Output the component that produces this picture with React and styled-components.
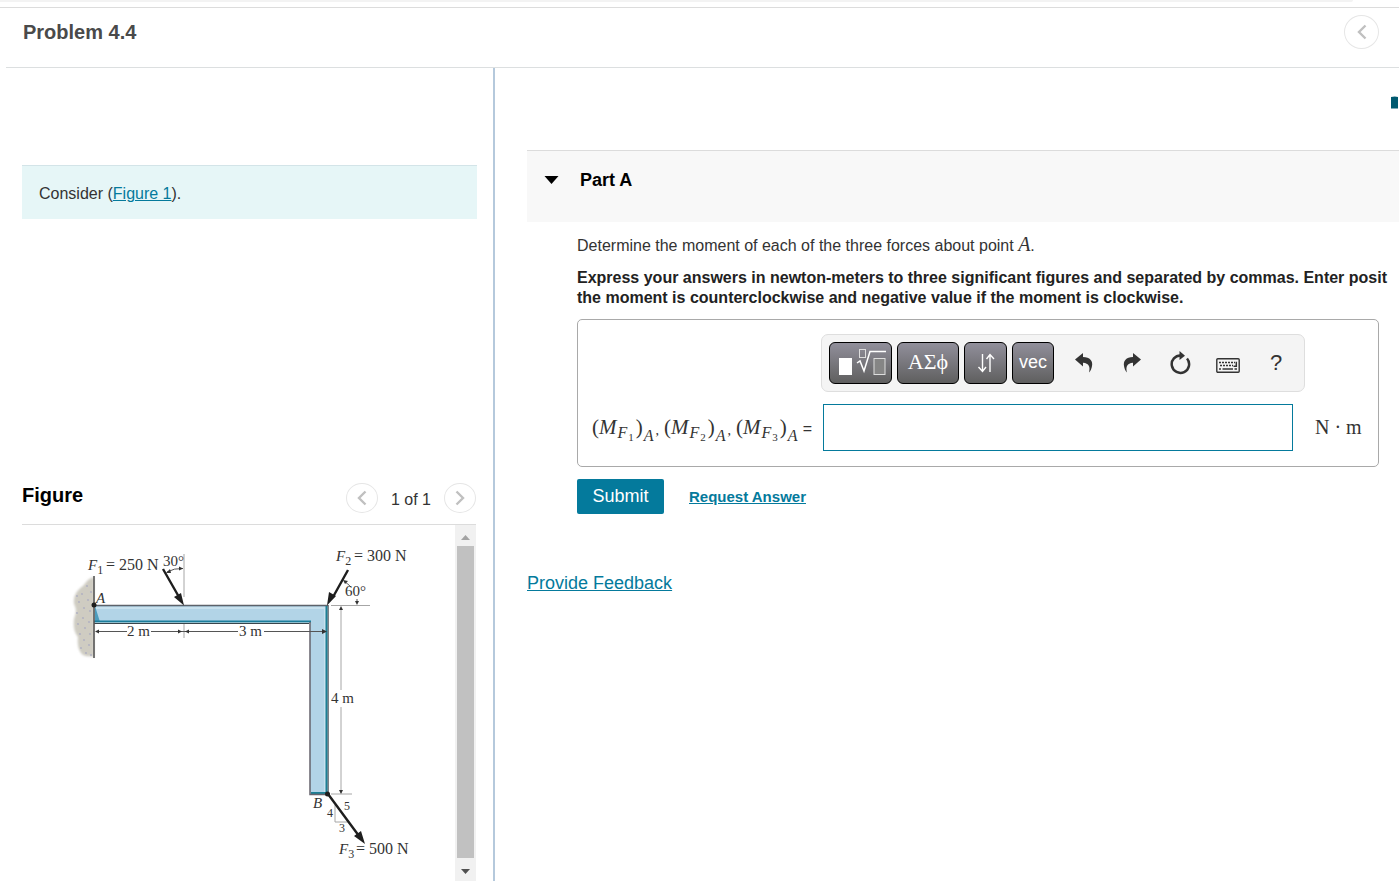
import React from 'react';
import styled, { createGlobalStyle } from 'styled-components';

const SANS = '"Liberation Sans", Arial, sans-serif';
const SERIF = '"Liberation Serif", "Times New Roman", serif';

const GlobalStyle = createGlobalStyle`
  * { box-sizing: border-box; }
  body { margin: 0; background: #fff; color: #333; font-family: ${SANS}; font-size: 16px; overflow: hidden; }
  h1, h2, h3, p { margin: 0; }
  button { font-family: inherit; cursor: pointer; padding: 0; }
`;

const Page = styled.div`
  display: flex;
  flex-direction: column;
  height: 100vh;
  overflow: hidden;
`;

const TopStrip = styled.div`
  height: 2px;
  margin-right: 46px;
  border-bottom-right-radius: 2px;
  background: #f3f3f3;
`;

const Header = styled.header`
  margin-top: 5px;
  border-top: 1px solid #dcdcdc;
  padding-left: 6px;
`;

const HeaderRow = styled.div`
  display: flex;
  align-items: flex-start;
  justify-content: space-between;
  height: 60px;
  padding: 7px 20px 0 17px;
  border-bottom: 1px solid #dcdfe0;
`;

const Title = styled.h1`
  font-size: 20px;
  line-height: 34px;
  color: #4a4a4a;
`;

const RoundButton = styled.button`
  display: flex;
  align-items: center;
  justify-content: center;
  width: ${(p) => p.$width}px;
  height: ${(p) => p.$height}px;
  border: 1px solid #e6e6e6;
  border-radius: 50%;
  background: #fff;
  color: #c0c0c0;
`;

const Columns = styled.main`
  display: flex;
  flex: 1;
  min-height: 0;
`;

const Sidebar = styled.section`
  display: flex;
  flex-direction: column;
  flex: none;
  width: 495px;
  padding: 97px 17px 0 22px;
  border-right: 2px solid #b5c9dc;
`;

const Link = styled.a`
  color: #047a9c;
  text-decoration: underline;
  font-size: ${(p) => p.$size || 16}px;
  font-weight: ${(p) => (p.$bold ? 700 : 400)};
`;

const Prompt = styled.p`
  height: 54px;
  margin-right: -1px;
  padding: 0 17px;
  border-top: 1px solid #d3e4e8;
  background: #e6f6f7;
  line-height: 55px;
`;

const FigureHeader = styled.div`
  display: flex;
  align-items: flex-start;
  justify-content: space-between;
  height: 42px;
  margin-top: 264px;
  border-bottom: 1px solid #dcdcdc;
`;

const Heading = styled.h2`
  font-size: 20px;
  line-height: 24px;
  color: #000;
`;

const Pager = styled.div`
  display: flex;
  gap: 13px;
  line-height: 34px;
`;

const FigureView = styled.div`
  display: flex;
  flex: 1;
  min-height: 0;
`;

const Drawing = styled.div`
  flex: 1;
  min-width: 0;
  overflow: hidden;
  svg { display: block; font-family: ${SERIF}; }
`;

const ScrollBar = styled.div`
  display: flex;
  flex-direction: column;
  width: 21px;
  padding: 0 2px;
  background: #f1f1f1;
`;

const ScrollArrow = styled.button`
  display: flex;
  align-items: center;
  justify-content: center;
  height: ${(p) => p.$height}px;
  padding-top: 3px;
  border: 0;
  background: none;
  color: ${(p) => p.$color};
`;

const ScrollThumb = styled.div`
  flex: 1;
  background: #c1c1c1;
`;

const Content = styled.section`
  flex: 1;
  min-width: 0;
  padding-left: 32px;
`;

const Toolbox = styled.div`
  display: flex;
  justify-content: flex-end;
  height: 82px;
  padding-top: 28px;
`;

const PartHeader = styled.div`
  display: flex;
  align-items: flex-start;
  gap: 21px;
  height: 72px;
  padding: 18px 17px 0;
  border-top: 1px solid #dcdcdc;
  background: #f8f8f8;
`;

const Toggle = styled.button`
  display: flex;
  align-items: center;
  height: 22px;
  border: 0;
  background: none;
`;

const PartTitle = styled.h3`
  font-size: 18px;
  line-height: 22px;
  color: #000;
`;

const PartBody = styled.div`
  padding-left: 50px;
`;

const Question = styled.p`
  padding-top: 10px;
  line-height: 24px;
`;

const Instructions = styled.p`
  margin-top: 10px;
  line-height: 20px;
  font-weight: 700;
  color: #222;
  white-space: nowrap;
`;

const AnswerBox = styled.div`
  margin: 11px 20px 0 0;
  padding: 14px 14px 15px;
  border: 1px solid #a9a9a9;
  border-radius: 5px;
`;

const Toolbar = styled.div`
  display: flex;
  width: 484px;
  height: 58px;
  margin-left: 229px;
  padding: 7px 0 0 7px;
  border: 1px solid #dedede;
  border-radius: 7px;
  background: #f4f4f4;
`;

const DarkKeys = styled.div`
  display: flex;
  gap: 5px;
  margin-right: 6px;
`;

const DarkKey = styled.button`
  display: flex;
  align-items: center;
  justify-content: center;
  width: ${(p) => p.$width}px;
  height: 42px;
  padding-bottom: 2px;
  border: 1px solid #000;
  border-radius: 6px;
  background: linear-gradient(#918f9b, #5f5f5f);
  color: #fff;
  font-family: ${(p) => (p.$serif ? SERIF : SANS)};
  font-size: ${(p) => (p.$serif ? 22 : 18)}px;
`;

const IconKey = styled.button`
  display: flex;
  align-items: center;
  justify-content: center;
  width: 48px;
  height: 42px;
  border: 0;
  background: none;
  color: #333;
  font-size: 22px;
`;

const AnswerRow = styled.div`
  display: flex;
  align-items: center;
  margin-top: 12px;
`;

const MathLabel = styled.label`
  display: flex;
  flex: none;
  align-items: baseline;
  width: 231px;
  color: #333;
  font-family: ${SERIF};
  font-size: 21px;
`;

const Term = styled.span`
  flex: none;
  width: ${(p) => (p.$last ? 64 : 72)}px;
  white-space: nowrap;
`;

const Sub = styled.sub`
  position: relative;
  top: ${(p) => p.$drop}px;
  margin: 0 1px;
  font-size: ${(p) => p.$size}px;
  line-height: 0;
  vertical-align: baseline;
`;

const Equals = styled.span`
  margin-left: auto;
  padding-right: 11px;
  font-family: ${SANS};
  font-size: 16px;
`;

const AnswerInput = styled.input`
  flex: 1;
  min-width: 0;
  height: 47px;
  padding: 0 10px;
  border: 1px solid #047a9c;
  font-size: 18px;
  outline: none;
`;

const Unit = styled.span`
  flex: none;
  width: 71px;
  padding-left: 22px;
  font-family: ${SERIF};
  font-size: 20px;
`;

const MathLetter = styled.i`
  font-family: ${SERIF};
  font-size: 20px;
`;

const Actions = styled.div`
  display: flex;
  align-items: center;
  gap: 25px;
  margin-top: 12px;
`;

const Submit = styled.button`
  width: 87px;
  height: 35px;
  border: 0;
  border-radius: 2px;
  background: #047a9c;
  color: #fff;
  font-size: 18px;
`;

const Feedback = styled.div`
  margin-top: 59px;
`;

const Chevron = ({ right }) => (
  <svg width="10" height="16" viewBox="0 0 10 16" fill="none" stroke="currentColor" strokeWidth="2.4" aria-hidden="true">
    <path d={right ? 'M1.5 1.5 8 8 1.5 14.5' : 'M8.5 1.5 2 8 8.5 14.5'} />
  </svg>
);

const Triangle = ({ up }) => (
  <svg width="9" height="5" viewBox="0 0 9 5" fill="currentColor" aria-hidden="true">
    <path d={up ? 'M0 5 4.5 0 9 5Z' : 'M0 0 4.5 5 9 0Z'} />
  </svg>
);

const speckles = [
  [87, 586], [91, 592], [82, 594], [88, 600], [79, 602], [84, 608], [90, 611], [77, 613],
  [83, 618], [89, 622], [78, 624], [85, 628], [80, 634], [90, 634], [84, 640], [89, 645],
  [81, 648], [86, 653], [91, 655], [77, 596],
];

function BeamDrawing() {
  return (
    <svg width="433" height="356" viewBox="22 525 433 356" role="img" aria-label="Cantilever beam with three forces">
      <defs>
        <filter id="soft" x="-20%" y="-20%" width="140%" height="140%">
          <feGaussianBlur stdDeviation="1" />
        </filter>
      </defs>
      <path
        d="M94 577C89 578 87 581 83 586C77 590 73 596 74 604C77 610 76 613 74 619C73 628 75 633 78 637C77 645 79 652 83 655C87 657 90 656 94 657Z"
        fill="#cfccc2"
        filter="url(#soft)"
      />
      {speckles.map(([x, y]) => (
        <circle key={`${x}-${y}`} cx={x} cy={y} r="1.1" fill="#b3b3c2" />
      ))}
      <path d="M94.5 605H328V794H310V622H94.5Z" fill="#b2d4e7" />
      <path d="M95 608H325V792" fill="none" stroke="#c8e1ee" strokeWidth="2" />
      <path d="M95 606 100 622H95Z" fill="#4c9cbd" />
      <path d="M94 621.5H311" stroke="#1b7d9b" strokeWidth="2" />
      <path d="M94 623.5H309" stroke="#39454b" />
      <path d="M94 605.5H328" stroke="#5d626a" strokeWidth="1.5" />
      <path d="M326.5 606V793H311" fill="none" stroke="#1c7f94" strokeWidth="2" />
      <path d="M328.2 605V794" stroke="#444a50" />
      <path d="M310 622V794.5H328" fill="none" stroke="#65636c" strokeWidth="1.5" />
      <path d="M94 576V658" stroke="#555" strokeWidth="1.6" />

      <g stroke="#a6a6a6" fill="none">
        <path d="M184 554V597M184 624V638" />
        <path d="M331 605.5H370M341 608V690M341 707V793M331 794H352" />
        <path d="M335 805V822H348" />
      </g>
      <g stroke="#555" fill="none">
        <path d="M96 631.5H127M151 631.5H238M264 631.5H326" />
        <path d="M167 572Q174 568 183 568.5" />
        <path d="M344 581Q348 584 351 587M357 599V603" />
      </g>
      <g fill="#333">
        <path d="M95 631.5 99 629.5V633.5ZM182 631.5 178 629.5V633.5ZM185 631.5 189 629.5V633.5ZM327 631.5 322 629V634Z" />
        <path d="M341 606 339 610H343ZM341 794 339 790H343ZM183 568.5 179 566.5V570.5ZM166 573 170 569 171 573ZM343 580 348 581 345 584ZM357 605 355 601H359Z" />
      </g>
      <g stroke="#1e1e1e" strokeWidth="2.4">
        <path d="M163 569 179 597M348 570 333 597M328 794 359 836" />
      </g>
      <g fill="#1e1e1e">
        <path d="M184 605.5 174 597 181 593ZM327 605.5 329 592 336 596ZM365 844 354 836 361 831Z" />
        <circle cx="94" cy="605" r="2.5" />
        <circle cx="327.5" cy="794" r="2.5" />
      </g>

      <g fill="#333" fontSize="15">
        <text x="88" y="570"><tspan fontStyle="italic">F</tspan><tspan fontSize="12" dy="4">1</tspan></text>
        <text x="106" y="570" fontSize="16">= 250 N</text>
        <text x="163" y="566">30°</text>
        <text x="336" y="561"><tspan fontStyle="italic">F</tspan><tspan fontSize="12" dy="4">2</tspan></text>
        <text x="354" y="561" fontSize="16">= 300 N</text>
        <text x="345" y="596">60°</text>
        <text x="96" y="603" fontStyle="italic">A</text>
        <text x="127" y="636">2 m</text>
        <text x="239" y="636">3 m</text>
        <text x="331" y="703">4 m</text>
        <text x="313" y="808" fontStyle="italic">B</text>
        <text x="344" y="810" fontSize="12">5</text>
        <text x="327" y="817" fontSize="12">4</text>
        <text x="339" y="832" fontSize="12">3</text>
        <text x="339" y="854"><tspan fontStyle="italic">F</tspan><tspan fontSize="12" dy="4">3</tspan></text>
        <text x="356" y="854" fontSize="16">= 500 N</text>
      </g>
    </svg>
  );
}

const TemplateIcon = () => (
  <svg width="50" height="30" viewBox="0 0 50 30" fill="none" stroke="#fff" aria-hidden="true">
    <rect x="3" y="11" width="13" height="17" fill="#fff" stroke="none" />
    <rect x="23.5" y="2.5" width="6" height="8" stroke="#ddd" />
    <path d="M21 16 24 14 28 24 34 4.5H50" strokeWidth="1.5" />
    <rect x="38" y="11.5" width="11" height="16" stroke="#ddd" fill="#858585" />
  </svg>
);

const ArrowsIcon = () => (
  <svg width="18" height="22" viewBox="0 0 18 22" fill="none" stroke="#fff" strokeWidth="1.4" aria-hidden="true">
    <path d="M5.5 3V20M1.5 16 5.500 20.500 9 16M13 21V4M9.500 8 13 3.500 17 8" />
  </svg>
);

const BendArrow = ({ flip }) => (
  <svg width="18" height="20" viewBox="0 0 18 20" fill="currentColor" aria-hidden="true">
    <path
      transform={flip ? 'translate(18 0) scale(-1 1)' : undefined}
      d="M0 6.5 8 0V4C15 4 18 8 17 13C16.700 15.500 15.500 18 14 19.500C15.500 14 14 10 8 9.700V13.500Z"
    />
  </svg>
);

const ResetIcon = () => (
  <svg width="22" height="24" viewBox="0 0 22 24" aria-hidden="true">
    <path d="M12 4.500A8.700 8.700 0 1 0 18 7.500" fill="none" stroke="currentColor" strokeWidth="2.500" />
    <path d="M10.500 0 16 4.800 10.500 9Z" fill="currentColor" />
  </svg>
);

const KeyboardIcon = () => (
  <svg width="24" height="19" viewBox="0 -4 24 19" fill="none" stroke="currentColor" aria-hidden="true">
    <rect x="0.800" y="0.800" width="22.400" height="13.400" rx="1" strokeWidth="1.400" />
    <path d="M3 4.500H19" strokeWidth="1.600" strokeDasharray="2 1" />
    <path d="M4 7.500H17" strokeWidth="1.600" strokeDasharray="2 1" />
    <path d="M20.300 3.700V8.300H17.500" strokeWidth="1.500" />
    <path d="M3 11H5M6.500 11H17M18.500 11H21" strokeWidth="1.500" />
  </svg>
);

const Moment = ({ index, last }) => (
  <Term $last={last}>
    (<i>M</i>
    <Sub $drop={4} $size={16}>
      <i>F</i>
      <Sub $drop={3} $size={11}>{index}</Sub>
    </Sub>
    )
    <Sub $drop={7} $size={16}><i>A</i></Sub>
    {!last && <Sub $drop={1} $size={14}>,</Sub>}
  </Term>
);

export default function App() {
  return (
    <Page>
      <GlobalStyle />
      <TopStrip />
      <Header>
        <HeaderRow>
          <Title>Problem 4.4</Title>
          <RoundButton $width={35} $height={34} aria-label="Previous problem"><Chevron /></RoundButton>
        </HeaderRow>
      </Header>
      <Columns>
        <Sidebar>
          <Prompt>Consider (<Link href="#figure">Figure 1</Link>).</Prompt>
          <FigureHeader id="figure">
            <Heading>Figure</Heading>
            <Pager>
              <RoundButton $width={32} $height={30} aria-label="Previous figure"><Chevron /></RoundButton>
              <span>1 of 1</span>
              <RoundButton $width={32} $height={30} aria-label="Next figure"><Chevron right /></RoundButton>
            </Pager>
          </FigureHeader>
          <FigureView>
            <Drawing><BeamDrawing /></Drawing>
            <ScrollBar>
              <ScrollArrow $height={21} $color="#a3a3a3" aria-label="Scroll up"><Triangle up /></ScrollArrow>
              <ScrollThumb />
              <ScrollArrow $height={23} $color="#505050" aria-label="Scroll down"><Triangle /></ScrollArrow>
            </ScrollBar>
          </FigureView>
        </Sidebar>
        <Content>
          <Toolbox>
            <svg width="8" height="13" viewBox="0 0 8 13" aria-hidden="true">
              <path d="M0 1Q4 0 7 1V12.500H0Z" fill="#005a70" />
            </svg>
          </Toolbox>
          <PartHeader>
            <Toggle aria-label="Collapse Part A">
              <svg width="15" height="8" viewBox="0 0 15 8" aria-hidden="true"><path d="M0.500 0H14.500L7.500 8Z" fill="#000" /></svg>
            </Toggle>
            <PartTitle>Part A</PartTitle>
          </PartHeader>
          <PartBody>
            <Question>
              Determine the moment of each of the three forces about point <MathLetter>A</MathLetter>.
            </Question>
            <Instructions>
              Express your answers in newton-meters to three significant figures and separated by commas. Enter posit
              <br />
              the moment is counterclockwise and negative value if the moment is clockwise.
            </Instructions>
            <AnswerBox>
              <Toolbar role="toolbar">
                <DarkKeys>
                  <DarkKey $width={63} aria-label="Templates"><TemplateIcon /></DarkKey>
                  <DarkKey $width={62} $serif>ΑΣϕ</DarkKey>
                  <DarkKey $width={43} aria-label="Arrows"><ArrowsIcon /></DarkKey>
                  <DarkKey $width={42}>vec</DarkKey>
                </DarkKeys>
                <IconKey aria-label="Undo"><BendArrow /></IconKey>
                <IconKey aria-label="Redo"><BendArrow flip /></IconKey>
                <IconKey aria-label="Reset"><ResetIcon /></IconKey>
                <IconKey aria-label="Keyboard shortcuts"><KeyboardIcon /></IconKey>
                <IconKey>?</IconKey>
              </Toolbar>
              <AnswerRow>
                <MathLabel htmlFor="answer">
                  <Moment index={1} />
                  <Moment index={2} />
                  <Moment index={3} last />
                  <Equals>=</Equals>
                </MathLabel>
                <AnswerInput id="answer" type="text" />
                <Unit>N · m</Unit>
              </AnswerRow>
            </AnswerBox>
            <Actions>
              <Submit type="button">Submit</Submit>
              <Link href="#answer" $size={15} $bold>Request Answer</Link>
            </Actions>
          </PartBody>
          <Feedback><Link href="#feedback" $size={18}>Provide Feedback</Link></Feedback>
        </Content>
      </Columns>
    </Page>
  );
}
